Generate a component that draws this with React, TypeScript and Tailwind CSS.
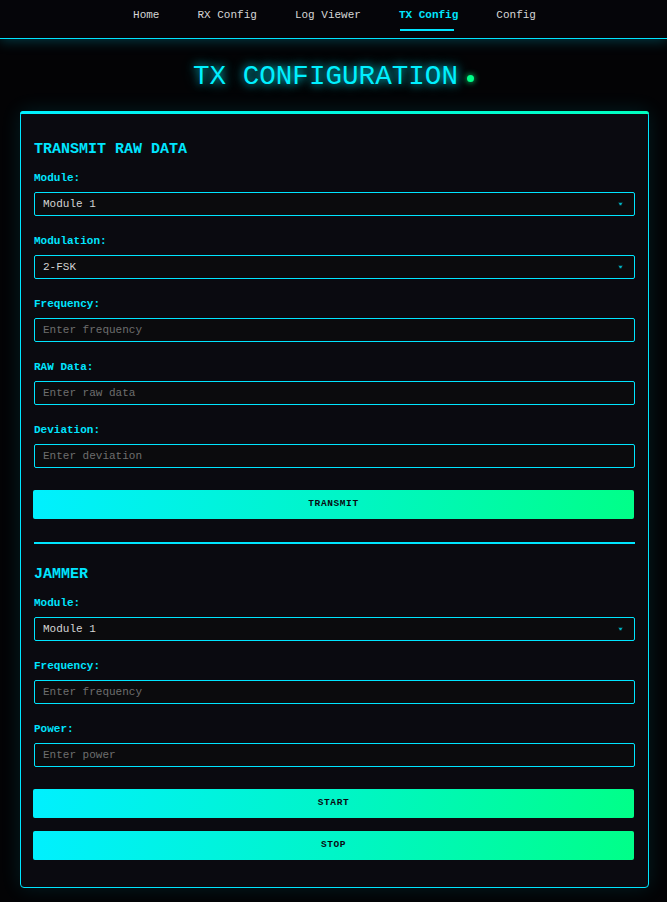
import React from "react";

const mono = "font-['Liberation_Mono','DejaVu_Sans_Mono',monospace]";

function Arrow() {
  return (
    <svg
      className="pointer-events-none absolute right-[12px] top-1/2 -translate-y-1/2"
      width="5"
      height="3"
      viewBox="0 0 5 3"
    >
      <path d="M0 0 H5 L3.5 1.5 V3 H1.5 V1.5 Z" fill="#00b4c4" />
    </svg>
  );
}

function SelectField({ label, value, options }: { label: string; value: string; options: string[] }) {
  return (
    <div className="mb-[18px]">
      <label className="block text-[11px] leading-[15px] font-bold text-[#00e5ff] mb-[6px]">{label}</label>
      <div className="relative">
        <select
          defaultValue={value}
          className={`${mono} block w-full h-[24px] appearance-none rounded-[2px] border border-[#00e5ff] bg-[#0b0b0d] pl-[8px] text-[11px] text-[#d4d4d4] outline-none`}
        >
          {options.map((o) => (
            <option key={o}>{o}</option>
          ))}
        </select>
        <Arrow />
      </div>
    </div>
  );
}

function InputField({ label, placeholder }: { label: string; placeholder: string }) {
  return (
    <div className="mb-[18px]">
      <label className="block text-[11px] leading-[15px] font-bold text-[#00e5ff] mb-[6px]">{label}</label>
      <input
        placeholder={placeholder}
        className={`${mono} block w-full h-[24px] rounded-[2px] border border-[#00e5ff] bg-[#0b0b0d] pl-[8px] text-[11px] text-[#d4d4d4] placeholder:text-[#6e6e6e] outline-none`}
      />
    </div>
  );
}

function GradButton({ children, className = "" }: { children: React.ReactNode; className?: string }) {
  return (
    <button
      className={`${mono} block w-full h-[29px] -translate-x-px rounded-[2px] bg-[linear-gradient(100deg,#00f0ff_0%,#00f5c8_50%,#00ff88_100%)] text-[9.5px] font-bold tracking-[0.6px] text-[#0a0a12] ${className}`}
    >
      {children}
    </button>
  );
}

export default function App() {
  const nav = ["Home", "RX Config", "Log Viewer", "TX Config", "Config"];
  return (
    <div className={`${mono} min-h-screen w-full bg-[#030305] pb-[14px]`}>
      <nav className="h-[39px] border-b border-[#00e5ff] bg-[#050509] shadow-[0_2px_12px_rgba(0,229,255,0.25)] flex justify-center items-start gap-[38px] pl-[2px]">
        {nav.map((n) => {
          const active = n === "TX Config";
          return (
            <div key={n} className="relative pt-[8px]">
              <span
                className={`block text-[11px] leading-[14px] ${active ? "text-[#00e5ff] font-bold" : "text-[#d6d6d6]"}`}
              >
                {n}
              </span>
              {active && (
                <span className="absolute left-[1px] top-[29px] h-[2px] w-[54px] bg-[#00e5ff]" />
              )}
            </div>
          );
        })}
      </nav>

      <div className="mt-[21px] mb-[17px] flex justify-center items-center gap-[9px]">
        <h1 className="text-[27.6px] leading-[34px] font-normal text-[#00f0ff] [text-shadow:0_0_8px_rgba(0,240,255,0.8),0_0_16px_rgba(0,240,255,0.4)]">
          TX CONFIGURATION
        </h1>
        <span className="mt-[3px] inline-block h-[7px] w-[7px] rounded-full bg-[#00ff88] shadow-[0_0_6px_#00ff88]" />
      </div>

      <div className="relative ml-[20px] w-[629px] rounded-[4px] border border-[#00e5ff] bg-[#0a0a10] px-[13px] pt-[29px] pb-[27px] shadow-[0_0_20px_rgba(0,229,255,0.12)]">
        <div className="absolute -top-px -left-px -right-px h-[3px] rounded-t-[4px] bg-[linear-gradient(90deg,#00f0ff,#00ffc0)]" />

        <h2 className="text-[15px] leading-[18px] font-bold text-[#00e5ff] mb-[12px]">TRANSMIT RAW DATA</h2>
        <SelectField label="Module:" value="Module 1" options={["Module 1", "Module 2"]} />
        <SelectField label="Modulation:" value="2-FSK" options={["2-FSK", "ASK/OOK", "GFSK", "MSK"]} />
        <InputField label="Frequency:" placeholder="Enter frequency" />
        <InputField label="RAW Data:" placeholder="Enter raw data" />
        <InputField label="Deviation:" placeholder="Enter deviation" />
        <GradButton className="mt-[22px]">TRANSMIT</GradButton>

        <div className="mt-[23px] h-[2px] w-full bg-[#00e5ff]" />

        <h2 className="mt-[22px] text-[15px] leading-[18px] font-bold text-[#00e5ff] mb-[12px]">JAMMER</h2>
        <SelectField label="Module:" value="Module 1" options={["Module 1", "Module 2"]} />
        <InputField label="Frequency:" placeholder="Enter frequency" />
        <InputField label="Power:" placeholder="Enter power" />
        <GradButton className="mt-[22px]">START</GradButton>
        <GradButton className="mt-[13px]">STOP</GradButton>
      </div>
    </div>
  );
}
